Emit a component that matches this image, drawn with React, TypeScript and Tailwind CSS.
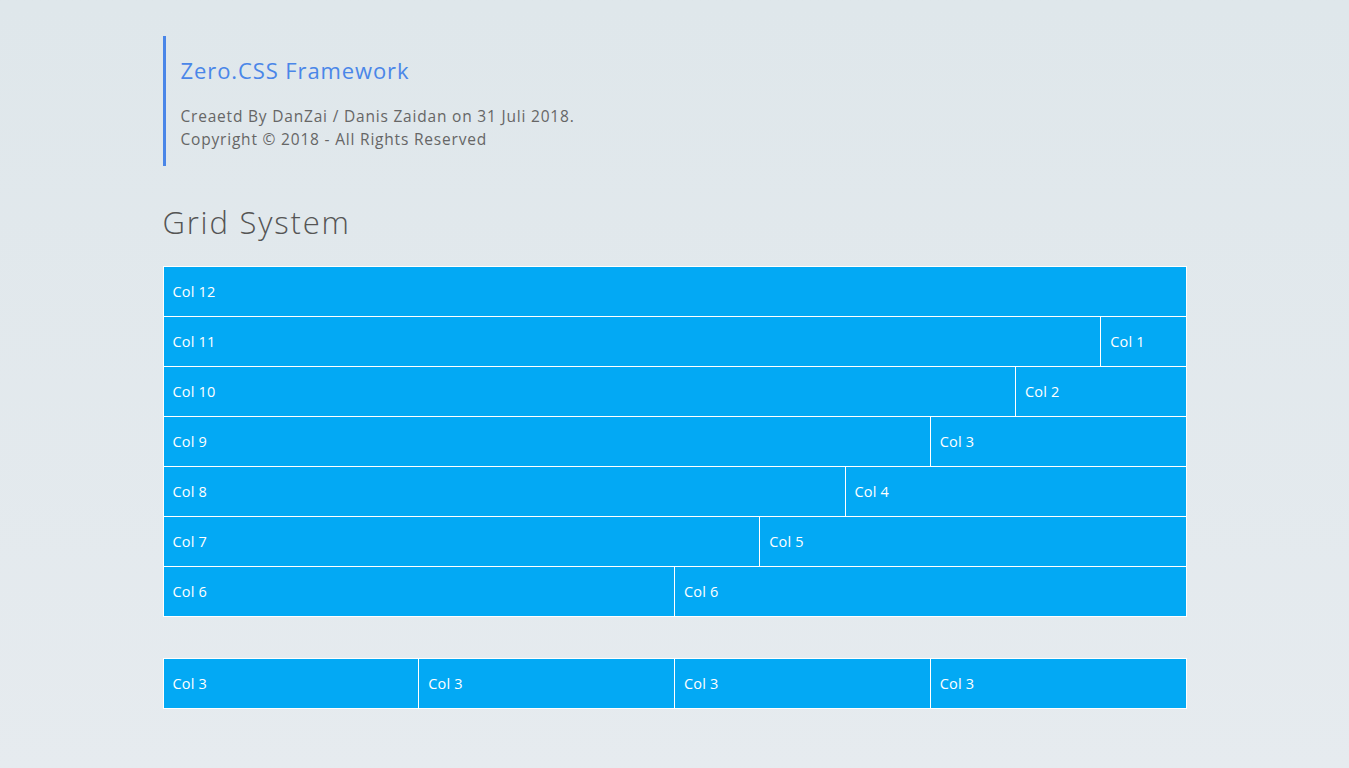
import React from "react";

const rows: number[][] = [
  [12],
  [11, 1],
  [10, 2],
  [9, 3],
  [8, 4],
  [7, 5],
  [6, 6],
];

const span: Record<number, string> = {
  1: "col-span-1",
  2: "col-span-2",
  3: "col-span-3",
  4: "col-span-4",
  5: "col-span-5",
  6: "col-span-6",
  7: "col-span-7",
  8: "col-span-8",
  9: "col-span-9",
  10: "col-span-10",
  11: "col-span-11",
  12: "col-span-12",
};

function Cell({ n }: { n: number }) {
  return (
    <div
      className={`${span[n]} h-[49px] bg-[#03a9f4] text-white text-[14.5px] tracking-[0.2px] flex items-center pl-[9px]`}
    >
      Col {n}
    </div>
  );
}

export default function App() {
  return (
    <div
      className="min-h-[768px] w-full bg-gradient-to-b from-[#dfe7eb] to-[#e6ebef]"
      style={{ fontFamily: '"Open Sans", "Liberation Sans", sans-serif' }}
    >
      <div className="mx-auto w-[1024px] pt-[36px]">
        <div className="border-l-[3px] border-[#4a86e8] pl-[15px] h-[130px] pt-[20px]">
          <h1 className="text-[22px] leading-[28px] tracking-[0.9px] text-[#4a86e8] font-normal">
            Zero.CSS Framework
          </h1>
          <p className="mt-[21px] text-[15.5px] leading-[23px] tracking-[0.8px] text-[#666]">
            Creaetd By DanZai / Danis Zaidan on 31 Juli 2018.
            <br />
            Copyright © 2018 - All Rights Reserved
          </p>
        </div>
        <h2 className="mt-[34px] text-[31px] leading-[44px] tracking-[1.8px] font-light text-[#555]">
          Grid System
        </h2>
        <div className="mt-[22px] grid grid-cols-12 gap-px bg-white p-px">
          {rows.map((r) => r.map((n, i) => <Cell key={`${r[0]}-${i}`} n={n} />))}
        </div>
        <div className="mt-[41px] grid grid-cols-12 gap-px bg-white p-px">
          {[3, 3, 3, 3].map((n, i) => (
            <Cell key={i} n={n} />
          ))}
        </div>
      </div>
    </div>
  );
}
